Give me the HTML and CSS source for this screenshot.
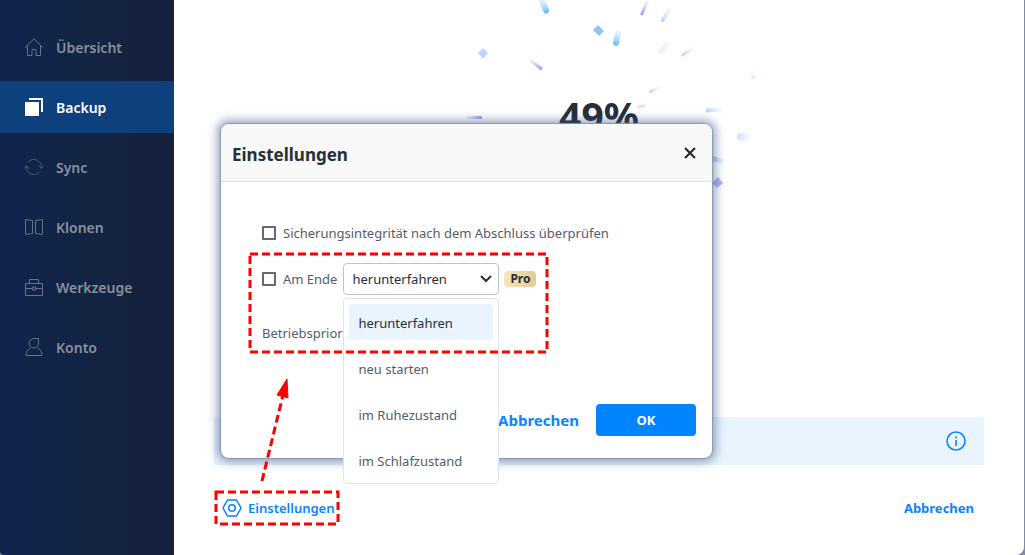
FILE: index.html
```html
<!DOCTYPE html>
<html lang="de">
<head>
<meta charset="utf-8">
<title>Backup</title>
<link rel="stylesheet" href="styles.css">
</head>
<body>
<div class="app">
  <nav class="sidebar">
    <a class="nav-item" href="#"><svg class="nav-icon" viewBox="0 0 20 20"><path d="M1 10.500 10 2l9 8.500M3.500 8.500v10h4.500v-6h4v6h4.500v-10"/></svg>Übersicht</a>
    <a class="nav-item active" href="#" aria-current="page"><svg class="nav-icon solid" viewBox="0 0 20 20"><path d="M1 5h14v14H1zM5 1h14v14h-2V3H5z"/></svg>Backup</a>
    <a class="nav-item" href="#"><svg class="nav-icon dim" viewBox="0 0 20 20"><path d="M4.500 5A7.400 7.400 0 0 1 17.400 10.500M14.500 8.500l3 3 2.200-3M15.500 15A7.400 7.400 0 0 1 2.600 9.500M5.500 11.500l-3-3-2.200 3"/></svg>Sync</a>
    <a class="nav-item" href="#"><svg class="nav-icon" viewBox="0 0 20 20"><path d="M1.500 2.500 8.500 3.500v13l-7 1zM18.500 2.500 11.500 3.500v13l7 1z"/></svg>Klonen</a>
    <a class="nav-item" href="#"><svg class="nav-icon" viewBox="0 0 20 20"><path d="M1.500 6.500h17v12h-17zM5.500 6.500v-4h9v4M1.500 11.500H8m4 0h6.500M8.500 10h3v3h-3z"/></svg>Werkzeuge</a>
    <a class="nav-item" href="#"><svg class="nav-icon" viewBox="0 0 20 20"><path d="M14.500 1.500H10A4.700 4.700 0 1 0 14.500 6.500zM6.500 11c-3 1.500-4.500 4-4.500 7.500h16c0-3.500-1.500-6-4.500-7.500"/></svg>Konto</a>
  </nav>
  <main class="main">
    <section class="progress">
      <svg class="confetti" viewBox="0 0 320 200" aria-hidden="true">
        <defs>
          <linearGradient id="sky"><stop offset="0" stop-color="#cfe6fd" stop-opacity=".3"/><stop offset="1" stop-color="#55b4fb"/></linearGradient>
          <linearGradient id="violet"><stop offset="0" stop-color="#d8e4fd" stop-opacity=".4"/><stop offset="1" stop-color="#8b97f5"/></linearGradient>
          <linearGradient id="pale"><stop offset="0" stop-color="#e3effe" stop-opacity=".3"/><stop offset="1" stop-color="#b9d1fd"/></linearGradient>
        </defs>
        <rect x="-8" y="-3" width="16" height="6" rx="3" fill="url(#sky)" transform="translate(94 6) rotate(65)"/>
        <rect x="-8" y="-3" width="16" height="6" rx="3" fill="url(#sky)" transform="translate(167 38) rotate(101)"/>
        <rect x="-8" y="-1" width="16" height="3" rx="1" fill="url(#violet)" transform="translate(195 8) rotate(113)"/>
        <rect x="-9" y="-2" width="17" height="4" rx="2" fill="url(#pale)" transform="translate(216 15) rotate(123)"/>
        <rect x="-7" y="-2" width="14" height="5" rx="2" fill="#edf4fd" transform="translate(214 48) rotate(130)"/>
        <rect x="-7" y="-1" width="14" height="3" rx="1" fill="url(#pale)" transform="translate(238 52) rotate(145)"/>
        <rect x="-8" y="-1" width="16" height="3" rx="1" fill="url(#violet)" transform="translate(86 64) rotate(38)"/>
        <rect x="-6" y="-1" width="12" height="3" rx="1" fill="url(#pale)" transform="translate(205 90) rotate(155)"/>
        <rect x="-8" y="-2" width="16" height="4" rx="1" fill="url(#pale)" transform="translate(264 110) rotate(177)"/>
        <rect x="-4" y="-2" width="8" height="3" rx="1" fill="#d8e8fd" transform="translate(191 106) rotate(170)"/>
        <rect x="-8" y="-1" width="16" height="3" rx="1" fill="url(#violet)" transform="translate(24 117)"/>
        <rect x="-7" y="-4" width="14" height="8" rx="4" fill="url(#pale)" opacity=".7" transform="translate(294 137) rotate(185)"/>
        <rect x="-8" y="-3" width="16" height="5" rx="1" fill="url(#violet)" transform="translate(266 159) rotate(195)"/>
        <path d="m148 25 6 6-5 5-6-6z" fill="#91c4fc"/>
        <path d="m33 48 5 5-5 6-5-6z" fill="#bcd5fd"/>
        <path d="m268 177 5 6-6 5-5-5z" fill="#adb8f9"/>
        <circle cx="303" cy="77" r="2" fill="#e1edfd"/>
      </svg>
      <p class="percent">49%</p>
    </section>
    <div class="notice"><button class="icon-button" type="button" aria-label="Info"><svg class="info-icon" viewBox="0 0 20 20"><circle cx="10" cy="10" r="9"/><path d="M10 9v6M10 5.500v2"/></svg></button></div>
    <footer class="footer">
      <button class="settings-link" type="button"><svg class="hex-icon" viewBox="0 0 20 20"><path d="M5.500 2h9L19 10l-4.500 8h-9L1 10z"/><circle cx="10" cy="10" r="3.300"/></svg>Einstellungen</button>
      <button class="text-button" type="button">Abbrechen</button>
    </footer>
  </main>

  <section class="dialog" role="dialog" aria-labelledby="dialog-title">
    <header class="dialog-header">
      <h1 class="dialog-title" id="dialog-title">Einstellungen</h1>
      <button class="icon-button" type="button" aria-label="Schließen"><svg class="close-icon" viewBox="0 0 12 12"><path d="m1 1 10 10M11 1 1 11"/></svg></button>
    </header>
    <form class="dialog-body">
      <div class="row"><label class="check-label"><input class="check" type="checkbox">Sicherungsintegrität nach dem Abschluss überprüfen</label></div>
      <div class="row">
        <label class="check-label"><input class="check" type="checkbox">Am Ende</label>
        <div class="combo">
          <select class="select" aria-label="Am Ende">
            <option>herunterfahren</option><option>neu starten</option><option>im Ruhezustand</option><option>im Schlafzustand</option>
          </select>
          <svg class="chevron" viewBox="0 0 12 8"><path d="m1 1 5 5 5-5"/></svg>
          <ul class="menu">
            <li class="menu-item selected">herunterfahren</li>
            <li class="menu-item">neu starten</li>
            <li class="menu-item">im Ruhezustand</li>
            <li class="menu-item">im Schlafzustand</li>
          </ul>
        </div>
        <span class="badge">Pro</span>
      </div>
      <div class="row priority">Betriebspriorität</div>
      <div class="actions">
        <button class="text-button large" type="button">Abbrechen</button>
        <button class="primary" type="button">OK</button>
      </div>
    </form>
  </section>

  <svg class="marks" width="360" height="280" viewBox="0 0 360 280" aria-hidden="true">
    <path d="M36 6H333V104H36Z"/>
    <path d="M2 244H124V276H2Z"/>
    <path d="M48 233 69 147"/>
    <path class="head" d="m73 131 1 19-11-3z"/>
  </svg>
</div>
</body>
</html>
```
FILE: styles.css
```css
* { box-sizing: border-box; }

body {
  margin: 0;
  background: #7c8ba3;
  font-family: "Noto Sans", "Open Sans", sans-serif;
  font-size: 13px;
  color: #545c6b;
}

button, select { font: inherit; }

button {
  padding: 0;
  border: 0;
  background: none;
  cursor: pointer;
}

svg {
  fill: none;
  stroke: currentColor;
}

.app {
  position: relative;
  display: grid;
  grid-template-columns: 174px 1fr;
  min-height: 100vh;
  overflow: hidden;
}

.sidebar {
  display: flex;
  flex-direction: column;
  gap: 8px;
  padding-top: 21px;
  background: linear-gradient(90deg, #10244e, #132443 50%, #16213c);
  border-bottom-left-radius: 4px;
}

.nav-item {
  display: flex;
  align-items: center;
  gap: 12px;
  height: 52px;
  padding-left: 24px;
  color: #8a909d;
  font-size: 14px;
  font-weight: 600;
  text-decoration: none;
}

.nav-item.active {
  background: #0d407d;
  color: #fff;
}

.nav-icon {
  width: 20px;
  height: 20px;
  color: #66718a;
}

.nav-icon.dim { color: #4d5a76; }

.nav-icon.solid {
  fill: #fff;
  stroke: none;
}

.main {
  display: flex;
  flex-direction: column;
  margin-right: 1px;
  padding: 0 40px;
  background: #fff;
  border-bottom-right-radius: 8px;
}

.progress {
  position: relative;
  flex: 1;
  padding-top: 96px;
}

.confetti {
  position: absolute;
  top: 0;
  left: calc(50% - 149px);
  width: 320px;
  stroke: none;
}

.percent {
  position: relative;
  margin: 0;
  color: #262f3a;
  font-size: 39px;
  font-weight: 700;
  line-height: 40px;
  text-align: center;
}

.notice {
  display: flex;
  align-items: center;
  justify-content: flex-end;
  height: 48px;
  padding-right: 18px;
  background: #e9f4ff;
}

.icon-button {
  display: flex;
  color: #0a84ff;
}

.info-icon {
  width: 20px;
  height: 20px;
  stroke-width: 1.6;
}

.footer {
  display: flex;
  align-items: center;
  justify-content: space-between;
  height: 90px;
  padding: 0 10px 4px 8px;
}

.settings-link {
  display: flex;
  align-items: center;
  gap: 6px;
  color: #0a84ff;
  font-weight: 600;
}

.hex-icon {
  width: 20px;
  height: 20px;
  stroke-width: 1.5;
}

.text-button {
  color: #0a84ff;
  font-weight: 700;
}

.text-button.large { font-size: 15px; }

.dialog {
  position: absolute;
  top: 124px;
  left: 221px;
  width: 491px;
  background: #fff;
  border-radius: 8px;
  box-shadow: 0 0 1px 1px #8d99b0, 0 0 10px 4px rgb(55 78 125 / 50%);
}

.dialog-header {
  display: flex;
  align-items: center;
  justify-content: space-between;
  height: 58px;
  padding: 0 16px 0 11px;
  background: #f8f8f8;
  border-bottom: 1px solid #dfe1e4;
  border-radius: 8px 8px 0 0;
}

.dialog-title {
  margin: 0;
  padding-top: 4px;
  color: #262f3a;
  font-size: 17px;
  line-height: 24px;
}

.close-icon {
  width: 12px;
  height: 12px;
  color: #23232f;
  stroke-width: 2;
}

.dialog-body { padding: 28px 16px 22px 41px; }

.row {
  display: flex;
  align-items: center;
  height: 46px;
}

.row.priority { height: 62px; }

.check-label {
  display: flex;
  align-items: center;
  gap: 7px;
}

.check {
  appearance: none;
  width: 14px;
  height: 14px;
  margin: 0;
  border: 2px solid #626a79;
  border-radius: 1px;
  background: #fff;
}

.combo {
  position: relative;
  width: 156px;
  margin: 0 5px 0 6px;
}

.select {
  appearance: none;
  display: block;
  width: 100%;
  height: 32px;
  padding: 0 30px 0 8px;
  border: 1px solid #bcc1ca;
  border-radius: 4px;
  background: #fff;
  color: #262f3a;
}

.chevron {
  position: absolute;
  top: 12px;
  right: 7px;
  width: 12px;
  height: 8px;
  color: #262f3a;
  stroke-width: 2;
  pointer-events: none;
}

.menu {
  position: absolute;
  top: 35px;
  left: 0;
  display: flex;
  flex-direction: column;
  gap: 10px;
  width: 100%;
  margin: 0;
  padding: 5px;
  border: 1px solid #e1e3e6;
  border-radius: 4px;
  background: #fff;
  list-style: none;
}

.menu-item {
  height: 36px;
  padding-left: 9px;
  line-height: 38px;
}

.menu-item.selected {
  background: #e9f4ff;
  border-radius: 4px;
  color: #262f3a;
}

.badge {
  width: 32px;
  border-radius: 4px;
  background: linear-gradient(90deg, #fae5b8, #e5cb94);
  color: #262f3a;
  font-size: 12px;
  font-weight: 700;
  line-height: 16px;
  text-align: center;
}

.actions {
  display: flex;
  align-items: center;
  justify-content: flex-end;
  gap: 17px;
  padding-top: 40px;
}

.primary {
  width: 100px;
  height: 32px;
  border-radius: 4px;
  background: #0085ff;
  color: #fff;
  font-weight: 700;
}

.marks {
  position: absolute;
  top: 248px;
  left: 214px;
  stroke: #f00;
  stroke-width: 3;
  stroke-dasharray: 8 4;
  pointer-events: none;
}

.marks .head {
  fill: #f00;
  stroke-dasharray: none;
  stroke-width: 1;
}
```
